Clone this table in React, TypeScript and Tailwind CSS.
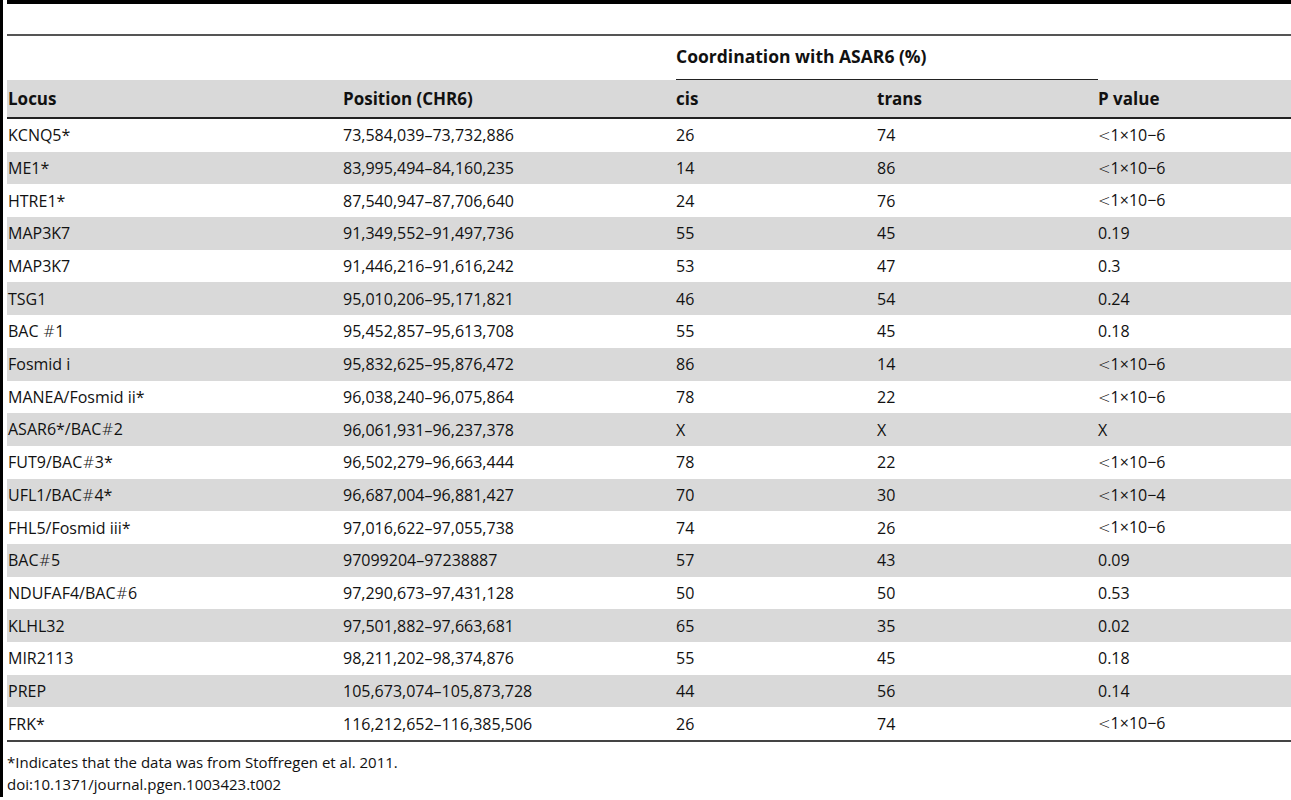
const rows: [string, string, string, string, string][] = [
  ["KCNQ5*", "73,584,039–73,732,886", "26", "74", "<1×10−6"],
  ["ME1*", "83,995,494–84,160,235", "14", "86", "<1×10−6"],
  ["HTRE1*", "87,540,947–87,706,640", "24", "76", "<1×10−6"],
  ["MAP3K7", "91,349,552–91,497,736", "55", "45", "0.19"],
  ["MAP3K7", "91,446,216–91,616,242", "53", "47", "0.3"],
  ["TSG1", "95,010,206–95,171,821", "46", "54", "0.24"],
  ["BAC #1", "95,452,857–95,613,708", "55", "45", "0.18"],
  ["Fosmid i", "95,832,625–95,876,472", "86", "14", "<1×10−6"],
  ["MANEA/Fosmid ii*", "96,038,240–96,075,864", "78", "22", "<1×10−6"],
  ["ASAR6*/BAC#2", "96,061,931–96,237,378", "X", "X", "X"],
  ["FUT9/BAC#3*", "96,502,279–96,663,444", "78", "22", "<1×10−6"],
  ["UFL1/BAC#4*", "96,687,004–96,881,427", "70", "30", "<1×10−4"],
  ["FHL5/Fosmid iii*", "97,016,622–97,055,738", "74", "26", "<1×10−6"],
  ["BAC#5", "97099204–97238887", "57", "43", "0.09"],
  ["NDUFAF4/BAC#6", "97,290,673–97,431,128", "50", "50", "0.53"],
  ["KLHL32", "97,501,882–97,663,681", "65", "35", "0.02"],
  ["MIR2113", "98,211,202–98,374,876", "55", "45", "0.18"],
  ["PREP", "105,673,074–105,873,728", "44", "56", "0.14"],
  ["FRK*", "116,212,652–116,385,506", "26", "74", "<1×10−6"],
];

// the # and < signs come from a symbol font in the original
function Sym({ text }: { text: string }) {
  const parts = text.split(/([#<])/);
  return (
    <>
      {parts.map((p, i) =>
        p === "#" || p === "<" ? (
          <span key={i} className="font-['DejaVu_Sans',sans-serif] font-extralight text-[15px]">
            {p}
          </span>
        ) : (
          <span key={i}>{p}</span>
        )
      )}
    </>
  );
}

const cols = "grid grid-cols-[335px_333px_201px_221px_1fr]";

export default function App() {
  return (
    <div className="flex min-h-[800px] bg-white text-[#111] font-['Open_Sans',sans-serif] text-[16px]">
      <div className="w-[3px] h-[797px] bg-black" />
      <div className="ml-[4px] flex-1 flex flex-col">
        <div className="h-[4px] bg-black" />
        <div className="h-[30px]" />
        <div className="h-[2px] bg-[#555]" />

        {/* spanning header */}
        <div className={`${cols} h-[44px] font-bold text-[17.5px] pl-[1px]`}>
          <div />
          <div />
          <div className="col-span-2 flex items-center border-b border-[#222] pb-[2px]">
            Coordination with ASAR6 (%)
          </div>
          <div />
        </div>

        <div className={`${cols} h-[37px] bg-[#d9d9d9] font-bold text-[17px] items-center pl-[1px]`}>
          <div>Locus</div>
          <div>Position (CHR6)</div>
          <div>cis</div>
          <div>trans</div>
          <div>P value</div>
        </div>
        <div className="h-[2px] bg-[#222]" />

        {rows.map((r, i) => (
          <div
            key={i}
            className={`${cols} h-[32.7px] items-center pl-[1px] ${i % 2 === 1 ? "bg-[#d9d9d9]" : ""}`}
          >
            <div><Sym text={r[0]} /></div>
            <div>{r[1]}</div>
            <div>{r[2]}</div>
            <div>{r[3]}</div>
            <div><Sym text={r[4]} /></div>
          </div>
        ))}
        <div className="h-[2px] bg-[#444]" />

        <div className="pt-[9px] leading-[22px] text-[15px]">
          <p>*Indicates that the data was from Stoffregen et al. 2011.</p>
          <p>doi:10.1371/journal.pgen.1003423.t002</p>
        </div>
      </div>
    </div>
  );
}
